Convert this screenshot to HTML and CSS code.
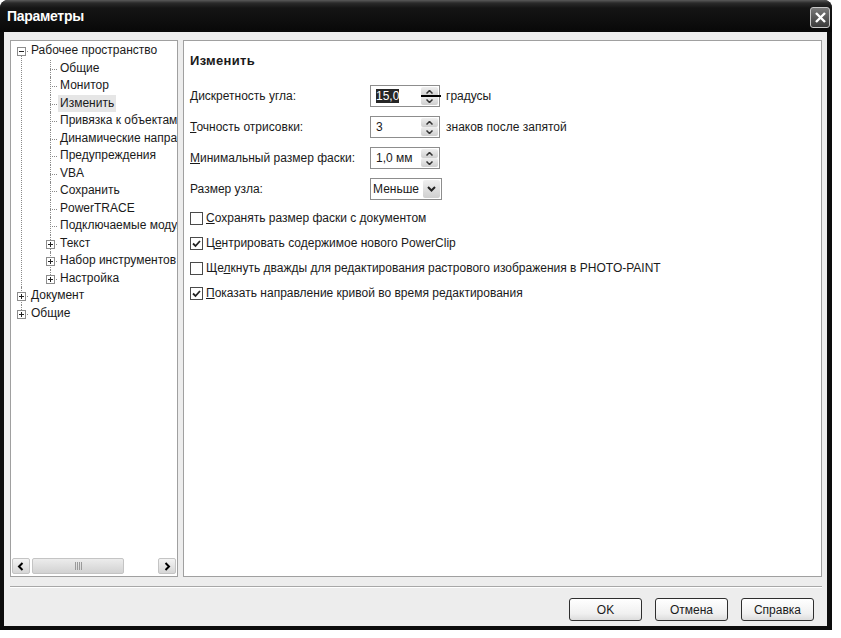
FILE: index.html
```html
<!DOCTYPE html>
<html lang="ru">
  <head>
    <meta charset="UTF-8" />
    <title>Параметры</title>
    <link rel="stylesheet" href="styles.css">
  </head>
  <body>
    <div class="window">
      <div class="titlebar">
        <span class="title">Параметры</span>
        <span class="close-btn">
          <svg width="13" height="13" viewBox="0 0 13 13"><path d="M2 2L11 11M11 2L2 11" stroke="#fff" stroke-width="2.4"/></svg>
        </span>
      </div>

      <div class="client">
        <div class="panes">
          <div class="tree-box">
            <ul class="tree">
              <li>
                <svg class="exp" width="9" height="9"><rect x="0.5" y="0.5" width="8" height="8" fill="#fff" stroke="#8c8c8c"/><path d="M2 4.5h5" stroke="#222"/></svg>
                <span class="lbl">Рабочее пространство</span>
                <ul>
                  <li><span class="lbl">Общие</span></li>
                  <li><span class="lbl">Монитор</span></li>
                  <li><span class="lbl sel">Изменить</span></li>
                  <li><span class="lbl">Привязка к объектам</span></li>
                  <li><span class="lbl">Динамические направляющие</span></li>
                  <li><span class="lbl">Предупреждения</span></li>
                  <li><span class="lbl">VBA</span></li>
                  <li><span class="lbl">Сохранить</span></li>
                  <li><span class="lbl">PowerTRACE</span></li>
                  <li><span class="lbl">Подключаемые модули</span></li>
                  <li>
                    <svg class="exp" width="9" height="9"><rect x="0.5" y="0.5" width="8" height="8" fill="#fff" stroke="#8c8c8c"/><path d="M2 4.5h5M4.5 2v5" stroke="#222"/></svg>
                    <span class="lbl">Текст</span>
                  </li>
                  <li>
                    <svg class="exp" width="9" height="9"><rect x="0.5" y="0.5" width="8" height="8" fill="#fff" stroke="#8c8c8c"/><path d="M2 4.5h5M4.5 2v5" stroke="#222"/></svg>
                    <span class="lbl">Набор инструментов</span>
                  </li>
                  <li>
                    <svg class="exp" width="9" height="9"><rect x="0.5" y="0.5" width="8" height="8" fill="#fff" stroke="#8c8c8c"/><path d="M2 4.5h5M4.5 2v5" stroke="#222"/></svg>
                    <span class="lbl">Настройка</span>
                  </li>
                </ul>
              </li>
              <li>
                <svg class="exp" width="9" height="9"><rect x="0.5" y="0.5" width="8" height="8" fill="#fff" stroke="#8c8c8c"/><path d="M2 4.5h5M4.5 2v5" stroke="#222"/></svg>
                <span class="lbl">Документ</span>
              </li>
              <li>
                <svg class="exp" width="9" height="9"><rect x="0.5" y="0.5" width="8" height="8" fill="#fff" stroke="#8c8c8c"/><path d="M2 4.5h5M4.5 2v5" stroke="#222"/></svg>
                <span class="lbl">Общие</span>
              </li>
            </ul>

            <div class="hscroll">
              <span class="sb-btn">
                <svg width="8" height="9"><path d="M5.5 1L2 4.5L5.5 8" fill="none" stroke="#000" stroke-width="2"/></svg>
              </span>
              <span class="sb-thumb">
                <svg width="9" height="8"><path d="M1.5 0v8M3.5 0v8M5.5 0v8M7.5 0v8" stroke="#9a9a9a"/></svg>
              </span>
              <span class="sb-track"></span>
              <span class="sb-btn">
                <svg width="8" height="9"><path d="M2.5 1L6 4.5L2.5 8" fill="none" stroke="#000" stroke-width="2"/></svg>
              </span>
            </div>
          </div>

          <div class="page">
            <h3 class="page-title">Изменить</h3>

            <div class="form">
              <div class="row">
                <span class="label"><u>Д</u>искретность угла:</span>
                <span class="spin">
                  <span class="spin-val"><span class="hl">15,0</span></span>
                  <span class="spin-btns">
                    <span class="spin-up"><svg width="7" height="4"><path d="M0.5 3.5L3.5 0.5L6.5 3.5" fill="none" stroke="#333" stroke-width="1.5"/></svg></span>
                    <span class="spin-down"><svg width="7" height="4"><path d="M0.5 0.5L3.5 3.5L6.5 0.5" fill="none" stroke="#333" stroke-width="1.5"/></svg></span>
                  </span>
                  <span class="cursor-line"></span>
                </span>
                <span class="unit">градусы</span>
              </div>
              <div class="row">
                <span class="label"><u>Т</u>очность отрисовки:</span>
                <span class="spin">
                  <span class="spin-val">3</span>
                  <span class="spin-btns">
                    <span class="spin-up"><svg width="7" height="4"><path d="M0.5 3.5L3.5 0.5L6.5 3.5" fill="none" stroke="#333" stroke-width="1.5"/></svg></span>
                    <span class="spin-down"><svg width="7" height="4"><path d="M0.5 0.5L3.5 3.5L6.5 0.5" fill="none" stroke="#333" stroke-width="1.5"/></svg></span>
                  </span>
                </span>
                <span class="unit">знаков после запятой</span>
              </div>
              <div class="row">
                <span class="label"><u>М</u>инимальный размер фаски:</span>
                <span class="spin">
                  <span class="spin-val">1,0 мм</span>
                  <span class="spin-btns">
                    <span class="spin-up"><svg width="7" height="4"><path d="M0.5 3.5L3.5 0.5L6.5 3.5" fill="none" stroke="#333" stroke-width="1.5"/></svg></span>
                    <span class="spin-down"><svg width="7" height="4"><path d="M0.5 0.5L3.5 3.5L6.5 0.5" fill="none" stroke="#333" stroke-width="1.5"/></svg></span>
                  </span>
                </span>
              </div>
              <div class="row">
                <span class="label">Размер узла:</span>
                <span class="combo">
                  <span class="combo-val">Меньше</span>
                  <span class="combo-btn"><svg width="9" height="6"><path d="M1 1L4.5 4.5L8 1" fill="none" stroke="#222" stroke-width="2"/></svg></span>
                </span>
              </div>
            </div>

            <div class="checks">
              <label class="check"><span class="box"></span><span><u>С</u>охранять размер фаски с документом</span></label>
              <label class="check"><span class="box"><svg width="11" height="11"><path d="M2 5.5L4.5 8L9 3" fill="none" stroke="#222" stroke-width="1.8"/></svg></span><span>Ц<u>е</u>нтрировать содержимое нового PowerClip</span></label>
              <label class="check"><span class="box"></span><span>Ще<u>л</u>кнуть дважды для редактирования растрового изображения в PHOTO-PAINT</span></label>
              <label class="check"><span class="box"><svg width="11" height="11"><path d="M2 5.5L4.5 8L9 3" fill="none" stroke="#222" stroke-width="1.8"/></svg></span><span><u>П</u>оказать направление кривой во время редактирования</span></label>
            </div>
          </div>
        </div>

        <div class="sep"></div>

        <div class="buttons">
          <button class="btn">OK</button>
          <button class="btn">Отмена</button>
          <button class="btn">Справка</button>
        </div>
      </div>
    </div>
  </body>
</html>
```

FILE: styles.css
```css
body {
  margin: 0;
  padding: 0;
  background: #fff;
  font-family: "Liberation Sans", Arial, sans-serif;
  font-size: 12px;
  color: #1a1a1a;
}
.window {
  width: 832px;
  height: 630px;
  background: #0c0c0c;
  border-radius: 8px 8px 0 0;
  display: flex;
  flex-direction: column;
  box-sizing: border-box;
  padding: 0 5px 4px 4px;
}
.titlebar {
  height: 32px;
  margin: 0 -5px 0 -4px;
  padding: 0 2px 0 7px;
  border-radius: 8px 8px 0 0;
  background: linear-gradient(#5a5a5a 0, #2a2a2a 3px, #151515 8px, #080808 100%);
  display: flex;
  align-items: center;
  justify-content: space-between;
}
.title {
  color: #fff;
  font-family: "Liberation Sans Narrow", "Liberation Sans", sans-serif;
  font-weight: bold;
  font-size: 14px;
  letter-spacing: -0.3px;
}
.close-btn {
  width: 18px;
  height: 19px;
  margin-top: 2px;
  border: 1px solid #c8c8c8;
  border-radius: 3px;
  background: linear-gradient(#7a7a7a, #3a3a3a);
  display: flex;
  align-items: center;
  justify-content: center;
}
.client {
  flex: 1;
  background: #ededed;
  display: flex;
  flex-direction: column;
  padding: 8px 5px 0 6px;
}
.panes {
  display: flex;
  gap: 5px;
  height: 537px;
}
.tree-box {
  width: 168px;
  background: #fff;
  border: 1px solid #a0a0a0;
  box-sizing: border-box;
  display: flex;
  flex-direction: column;
  overflow: hidden;
}
.tree,
.tree ul {
  list-style: none;
  margin: 0;
  padding: 0;
}
.tree {
  flex: 1;
  padding-top: 1px;
  white-space: nowrap;
}
.tree li {
  position: relative;
  padding-left: 18px;
}
.tree li::before {
  content: "";
  position: absolute;
  left: 10px;
  top: 0;
  bottom: 0;
  border-left: 1px dotted #8a8a8a;
}
.tree > li:first-child::before {
  top: 9px;
}
.tree li:last-child::before {
  bottom: auto;
  height: 9px;
}
.tree li::after {
  content: "";
  position: absolute;
  left: 10px;
  top: 9px;
  width: 7px;
  border-top: 1px dotted #8a8a8a;
}
.tree ul li {
  padding-left: 29px;
}
.tree ul li::before,
.tree ul li::after {
  left: 21px;
}
.tree ul li::after {
  width: 7px;
}
.exp {
  position: absolute;
  left: 6px;
  top: 5px;
  z-index: 1;
}
.tree ul .exp {
  left: 17px;
}
.lbl {
  display: inline-block;
  line-height: 17.5px;
  padding: 0 2px;
}
.lbl.sel {
  background: #e6e6e6;
}
.tree ul {
  margin-left: -18px;
  padding-left: 18px;
}
.hscroll {
  height: 17px;
  display: flex;
  padding: 0 1px 1px;
  background: #fff;
}
.sb-btn {
  width: 18px;
  height: 16px;
  box-sizing: border-box;
  border: 1px solid #c4c4c4;
  border-radius: 2px;
  background: linear-gradient(#f4f4f4, #d6d6d6);
  display: flex;
  align-items: center;
  justify-content: center;
}
.sb-thumb {
  width: 92px;
  height: 16px;
  margin-left: 2px;
  box-sizing: border-box;
  border: 1px solid #c4c4c4;
  border-radius: 2px;
  background: linear-gradient(#ececec, #d2d2d2);
  display: flex;
  align-items: center;
  justify-content: center;
}
.sb-track {
  flex: 1;
}
.page {
  flex: 1;
  background: #fff;
  border: 1px solid #a0a0a0;
  box-sizing: border-box;
  padding: 0 6px;
}
.page-title {
  margin: 12px 0 0;
  font-size: 13px;
  font-weight: bold;
  letter-spacing: 0.3px;
}
.form {
  margin-top: 17px;
  display: flex;
  flex-direction: column;
  gap: 9px;
}
.row {
  display: flex;
  align-items: center;
  height: 22px;
}
.label {
  width: 180px;
}
.spin {
  position: relative;
  width: 70px;
  height: 22px;
  box-sizing: border-box;
  border: 1px solid #8d8d8d;
  display: flex;
  align-items: center;
  justify-content: space-between;
  padding: 0 1px 0 5px;
}
.hl {
  background: #262626;
  color: #fff;
}
.spin-btns {
  width: 17px;
  height: 18px;
  display: flex;
  flex-direction: column;
}
.spin-up,
.spin-down {
  flex: 1;
  background: linear-gradient(#efefef, #cfcfcf);
  border-radius: 2px;
  display: flex;
  align-items: center;
  justify-content: center;
}
.cursor-line {
  position: absolute;
  right: -2px;
  top: 9px;
  width: 20px;
  height: 2px;
  background: #000;
}
.unit {
  margin-left: 6px;
}
.combo {
  width: 72px;
  height: 22px;
  box-sizing: border-box;
  border: 1px solid #8d8d8d;
  display: flex;
  align-items: center;
  justify-content: space-between;
  padding: 0 1px 0 2px;
}
.combo-btn {
  width: 17px;
  height: 18px;
  border-radius: 2px;
  background: linear-gradient(#efefef, #cfcfcf);
  display: flex;
  align-items: center;
  justify-content: center;
}
.checks {
  margin-top: 11px;
  display: flex;
  flex-direction: column;
  gap: 11px;
}
.check {
  display: flex;
  align-items: center;
  height: 14px;
}
.box {
  width: 13px;
  height: 13px;
  box-sizing: border-box;
  border: 1px solid #4a4a4a;
  background: #fff;
  margin-right: 3px;
  display: flex;
  align-items: center;
  justify-content: center;
}
.sep {
  margin-top: 9px;
  border-top: 1px solid #a8a8a8;
  border-bottom: 1px solid #fff;
}
.buttons {
  display: flex;
  justify-content: flex-end;
  gap: 13px;
  padding: 10px 8px 0 0;
}
.btn {
  width: 73px;
  height: 23px;
  border: 1px solid #2e2e2e;
  border-radius: 3px;
  background: linear-gradient(#ffffff, #f0f0f0 70%, #dcdcdc);
  font-family: "Liberation Sans", Arial, sans-serif;
  font-size: 12px;
  font-weight: normal;
  color: #1a1a1a;
  padding: 0;
}
```
